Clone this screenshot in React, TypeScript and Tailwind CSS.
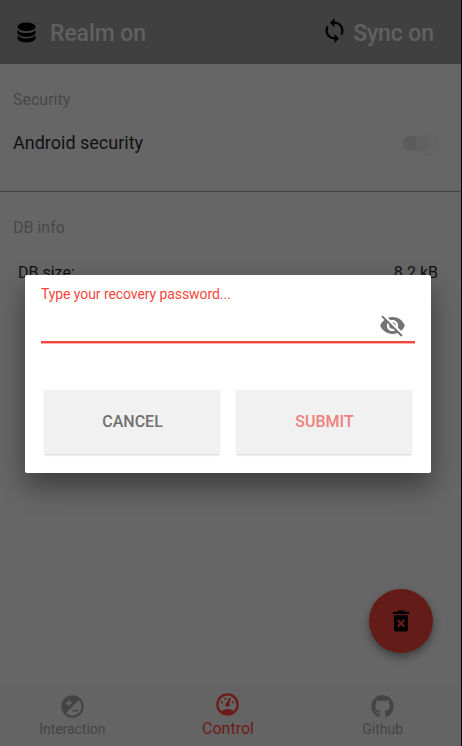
import React from 'react';
import { FaGithub } from 'react-icons/fa';
import { MdLoop, MdVisibilityOff, MdDeleteForever } from 'react-icons/md';

function DatabaseIcon() {
  return (
    <svg width="19" height="21" viewBox="0 0 19 21" fill="#000000">
      <ellipse cx="9.5" cy="4.8" rx="9.1" ry="4.3" />
      <path d="M.4 8.2C2.2 10.2 5.6 11.1 9.5 11.1S16.8 10.2 18.6 8.2V10.6C18.6 13.2 14.6 15 9.5 15S.4 13.2.4 10.6Z" />
      <path d="M.4 13.6C2.2 15.6 5.6 16.5 9.5 16.5S16.8 15.6 18.6 13.6V16C18.6 18.6 14.6 20.4 9.5 20.4S.4 18.6.4 16Z" />
    </svg>
  );
}

function ExposureIcon() {
  return (
    <svg width="27" height="27" viewBox="0 0 24 24" fill="currentColor">
      <path
        fillRule="evenodd"
        d="M12 2A10 10 0 1 0 12 22A10 10 0 1 0 12 2ZM17.7 6.3A8 8 0 0 1 6.3 17.7ZM8 6V8H6V9.5H8V11.5H9.5V9.5H11.5V8H9.5V6Z"
      />
      <path d="M12 15H17V16.5H12Z" />
    </svg>
  );
}

function GaugeIcon() {
  return (
    <svg width="27" height="27" viewBox="0 0 24 24" fill="currentColor">
      <path d="M12,2A10,10 0 0,0 2,12A10,10 0 0,0 12,22A10,10 0 0,0 22,12A10,10 0 0,0 12,2M12,4A8,8 0 0,1 20,12C20,14.4 19,16.5 17.3,18C15.9,16.7 14,16 12,16C10,16 8.2,16.7 6.7,18C5,16.5 4,14.4 4,12A8,8 0 0,1 12,4M14,5.89C13.62,5.9 13.26,6.15 13.1,6.54L11.81,9.77L11.71,10C11,10.13 10.41,10.6 10.14,11.26C9.73,12.29 10.23,13.45 11.26,13.86C12.29,14.27 13.45,13.77 13.86,12.74C14.12,12.08 14,11.32 13.57,10.76L13.67,10.5L14.96,7.29L14.97,7.26C15.17,6.75 14.92,6.17 14.41,5.96C14.28,5.91 14.15,5.89 14,5.89M10,6A1,1 0 0,0 9,7A1,1 0 0,0 10,8A1,1 0 0,0 11,7A1,1 0 0,0 10,6M7,9A1,1 0 0,0 6,10A1,1 0 0,0 7,11A1,1 0 0,0 8,10A1,1 0 0,0 7,9M17,9A1,1 0 0,0 16,10A1,1 0 0,0 17,11A1,1 0 0,0 18,10A1,1 0 0,0 17,9Z" />
    </svg>
  );
}

function Header() {
  return (
    <header className="flex h-16 shrink-0 items-center justify-between bg-[#404040] pr-[27px] pl-[17px] text-[23px] font-medium text-[#606060]">
      <div className="flex items-center">
        <DatabaseIcon />
        <span className="ml-[14px] pt-[4px] tracking-[-0.1px]">Realm on</span>
      </div>
      <div className="flex items-center">
        <MdLoop className="-mt-1 size-[27px] text-black" />
        <span className="ml-[5px] pt-[4px] tracking-[-0.1px]">Sync on</span>
      </div>
    </header>
  );
}

function TabBar() {
  return (
    <nav className="grid h-[61px] shrink-0 grid-cols-3 border-b border-[#675d60] bg-[#646464] text-[#444444]">
      <div className="flex flex-col items-center pr-[9px] pt-[8px]">
        <ExposureIcon />
        <span className="text-[14px] leading-[18px] tracking-[-0.05px]">Interaction</span>
      </div>
      <div className="flex flex-col items-center pr-[5px] pt-[6px] text-[#6b1c18]">
        <GaugeIcon />
        <span className="mt-px text-[16px] leading-[20px]">Control</span>
      </div>
      <div className="flex flex-col items-center pr-[3px] pt-[10px]">
        <FaGithub className="size-[23px]" />
        <span className="mt-[2px] text-[14px] leading-[18px]">Github</span>
      </div>
    </nav>
  );
}

function PasswordDialog() {
  return (
    <div
      role="dialog"
      className="absolute top-[275px] left-[25px] flex h-[198px] w-[406px] flex-col rounded-[2px] bg-white px-4 pt-[11px] shadow-[0_13px_28px_rgba(0,0,0,0.42)]"
    >
      <label className="text-[14px] leading-4 tracking-[-0.08px] text-[#f4473c]">Type your recovery password...</label>
      <div className="flex h-[41px] items-center justify-end border-b-2 border-[#f4473c] pr-[9px] pt-[8px] text-[#737373] shadow-[0_1px_0_#fbb5b1]">
        <MdVisibilityOff className="size-[27px]" />
      </div>
      <div className="mt-[47px] flex gap-[18px] px-1 text-[16px] font-medium">
        <button className="h-16 flex-1 bg-[#f1f1f1] pl-px text-[#707070] shadow-[0_1px_2px_rgba(0,0,0,0.2)]">CANCEL</button>
        <button className="h-16 flex-1 bg-[#f1f1f1] pl-px text-[#ee817b] shadow-[0_1px_2px_rgba(0,0,0,0.2)]">SUBMIT</button>
      </div>
    </div>
  );
}

export default function App() {
  return (
    <div className="relative flex h-[746px] w-[462px] flex-col overflow-hidden border-r border-black bg-[#666666] font-['Roboto',sans-serif]">
      <Header />
      <main className="flex min-h-0 flex-1 flex-col">
        <section className="h-[128px] border-b border-[#454545] pr-[22px] pl-[13px] pt-[26px] shadow-[inset_0_-1px_0_#5e5e5e]">
          <h2 className="text-[16px] leading-5 text-[#484848]">Security</h2>
          <div className="mt-[21px] flex items-center justify-between">
            <span className="text-[18px] leading-6 text-[#111111]">Android security</span>
            <div className="flex h-[15px] w-9 items-center">
              <div className="h-[15px] w-[26px] shrink-0 rounded-full bg-[#5c5c5c]" />
              <div className="-ml-[14px] size-[24px] shrink-0 rounded-full bg-[#646464]/70 shadow-[0_1px_1px_rgba(0,0,0,0.08)]" />
            </div>
          </div>
        </section>
        <section className="pt-[26px] pr-[23px] pl-[13px]">
          <h2 className="text-[16px] leading-5 text-[#484848]">DB info</h2>
          <div className="mt-[25px] flex justify-between pl-[5px] text-[16px] leading-5 text-[#111111]">
            <span>DB size:</span>
            <span>8.2 kB</span>
          </div>
        </section>
      </main>
      <TabBar />
      <button className="absolute top-[589px] left-[369px] flex size-16 items-center justify-center rounded-full bg-[#641c18] text-black shadow-[0_4px_8px_rgba(0,0,0,0.4)]">
        <MdDeleteForever className="size-[28px]" />
      </button>
      <PasswordDialog />
    </div>
  );
}
